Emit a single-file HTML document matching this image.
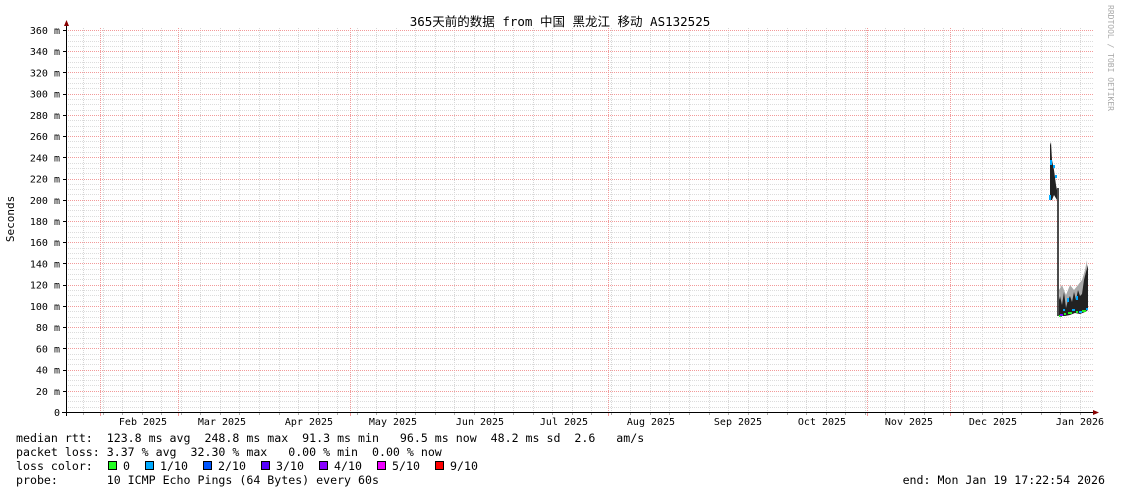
<!DOCTYPE html>
<html><head><meta charset="utf-8"><style>
html,body{margin:0;padding:0;background:#fff;width:1121px;height:494px;overflow:hidden}
svg{display:block}
text{font-family:"DejaVu Sans Mono","Liberation Mono","Noto Sans CJK SC",monospace;fill:#000}
#grid rect{shape-rendering:crispEdges}
</style></head><body>
<svg id="g" width="1121" height="494" xmlns="http://www.w3.org/2000/svg">
<defs>
<pattern id="hg" x="0" y="0" width="2" height="1" patternUnits="userSpaceOnUse"><rect width="1" height="1" fill="#dcdcdc"/></pattern>
<pattern id="hr" x="0" y="0" width="2" height="1" patternUnits="userSpaceOnUse"><rect width="1" height="1" fill="#f29a9a"/></pattern>
<pattern id="vg" x="0" y="0" width="1" height="2" patternUnits="userSpaceOnUse"><rect width="1" height="1" fill="#d6d6d6"/></pattern>
<pattern id="vr" x="0" y="0" width="1" height="2" patternUnits="userSpaceOnUse"><rect width="1" height="1" fill="#f29a9a"/></pattern>
</defs>
<g id="grid"></g>
<text x="560" y="26" font-size="12.5" text-anchor="middle">365天前的数据 from  中国 黑龙江 移动 AS132525</text>
<text transform="translate(14,219) rotate(-90)" font-size="11" text-anchor="middle">Seconds</text>
<text transform="translate(1108,5) rotate(90)" font-size="8" style="fill:#aaa">RRDTOOL / TOBI OETIKER</text>
<g font-size="10" text-anchor="end" id="ylab"></g>
<g font-size="10" text-anchor="middle">
<text x="143" y="425">Feb 2025</text><text x="222" y="425">Mar 2025</text><text x="309" y="425">Apr 2025</text>
<text x="393" y="425">May 2025</text><text x="480" y="425">Jun 2025</text><text x="564" y="425">Jul 2025</text>
<text x="651" y="425">Aug 2025</text><text x="738" y="425">Sep 2025</text><text x="822" y="425">Oct 2025</text>
<text x="909" y="425">Nov 2025</text><text x="993" y="425">Dec 2025</text><text x="1080" y="425">Jan 2026</text>
</g>
<polygon fill="#aaa" points="1059,290 1062,285 1066,295 1070,285 1074,290 1078,285 1082,280 1085,270 1087,260 1088,300 1060,310"/>
<polygon fill="#222" points="1059,300 1060,296 1062,305 1064,292 1066,308 1068,300 1070,296 1072,302 1074,292 1076,300 1078,290 1080,296 1082,294 1084,280 1086,272 1088,265 1088,310 1085,312 1080,314 1075,313 1070,315 1065,316 1060,316 1059,316"/>
<polygon fill="#222" points="1050,145 1051,142 1052,160 1053,165 1054,170 1056,185 1057,190 1057,200 1054,195 1052,200 1050,200"/>
<line x1="1058" y1="188" x2="1058" y2="316" stroke="#111" stroke-width="1.5"/>
<g stroke-width="2" fill="none">
<path d="M1051,160v5M1050,195v5M1054,165v3M1056,175v3" stroke="#0af"/>
<path d="M1059,316h3M1064,314h2M1068,313h4M1076,312h2M1082,311h4" stroke="#2e2"/>
<path d="M1060,315h3" stroke="#70f"/>
<path d="M1063,310h2M1072,310h3M1079,312h3M1086,309h2M1068,298v4M1077,296v4" stroke="#0af"/>
</g>
<g font-size="11.6">
<text x="16" y="442" xml:space="preserve">median rtt:  123.8 ms avg  248.8 ms max  91.3 ms min   96.5 ms now  48.2 ms sd  2.6   am/s</text>
<text x="16" y="456" xml:space="preserve">packet loss: 3.37 % avg  32.30 % max   0.00 % min  0.00 % now</text>
<text x="16" y="470" xml:space="preserve">loss color:</text>
<text x="16" y="484" xml:space="preserve">probe:       10 ICMP Echo Pings (64 Bytes) every 60s</text>
<text x="1105" y="484" text-anchor="end">end: Mon Jan 19 17:22:54 2026</text>
<text x="123" y="470">0</text><text x="160" y="470">1/10</text><text x="218" y="470">2/10</text>
<text x="276" y="470">3/10</text><text x="334" y="470">4/10</text><text x="392" y="470">5/10</text><text x="450" y="470">9/10</text>
</g>
<g stroke="#000" stroke-width="1">
<rect x="108.5" y="461.5" width="8" height="8" fill="#2f2"/>
<rect x="145.5" y="461.5" width="8" height="8" fill="#0af"/>
<rect x="203.5" y="461.5" width="8" height="8" fill="#05f"/>
<rect x="261.5" y="461.5" width="8" height="8" fill="#50f"/>
<rect x="319.5" y="461.5" width="8" height="8" fill="#80f"/>
<rect x="377.5" y="461.5" width="8" height="8" fill="#e0f"/>
<rect x="435.5" y="461.5" width="8" height="8" fill="#f00"/>
</g>
</svg>
<script>
var ns="http://www.w3.org/2000/svg",g=document.getElementById("grid"),yl=document.getElementById("ylab");
function R(x,y,w,h,f){var r=document.createElementNS(ns,"rect");r.setAttribute("x",x);r.setAttribute("y",y);r.setAttribute("width",w);r.setAttribute("height",h);r.setAttribute("fill",f);g.appendChild(r);}
function Y(v){return 412-v*382/360;}
for(var x=83;x<1093;x+=19.55){var xx=Math.round(x);R(xx,27,1,385,"url(#vg)");R(xx,412,1,3,"#aaa");}
for(var v=5;v<=360;v+=5){var y=Math.round(Y(v));if(v%20==0){R(67,y,1026,1,"url(#hr)");R(63,y,4,1,"#000");}else R(67,y,1026,1,"url(#hg)");}
[100,178,350,608,867,950].forEach(function(x){R(x,27,1,385,"url(#vr)");R(x,412,1,4,"#f29a9a");});
for(var v=0;v<=360;v+=20){var t=document.createElementNS(ns,"text");t.setAttribute("x",60);t.setAttribute("y",Y(v)+4);t.textContent=v==0?"0":v+" m";yl.appendChild(t);}
R(66,24,1,392,"#000");R(62,412,1034,1,"#000");
var a=document.createElementNS(ns,"polygon");a.setAttribute("points","64,26 69,26 66.5,20");a.setAttribute("fill","#800");g.appendChild(a);
var b=document.createElementNS(ns,"polygon");b.setAttribute("points","1093,410 1093,415 1099,412.5");b.setAttribute("fill","#800");g.appendChild(b);
</script>
</body></html>
